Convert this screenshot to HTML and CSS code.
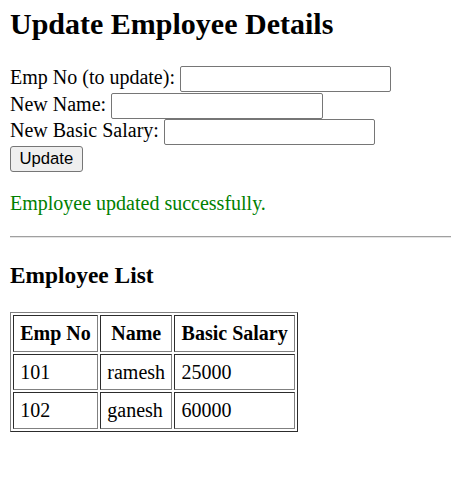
FILE: index.html
```html
<!DOCTYPE html>
<html>
<head>
<meta charset="utf-8">
<title>Update Employee</title>
<link rel="stylesheet" href="styles.css">
</head>
<body>
<h1 class="title">Update Employee Details</h1>
<form class="form">
  <div class="row"><label class="label">Emp No (to update):</label><input type="text" class="field"></div>
  <div class="row"><label class="label">New Name:</label><input type="text" class="field"></div>
  <div class="row"><label class="label">New Basic Salary:</label><input type="text" class="field"></div>
  <button type="button" class="btn">Update</button>
</form>
<p class="msg">Employee updated successfully.</p>
<div class="rule"></div>
<h3 class="subtitle">Employee List</h3>
<table class="list">
  <tr><th>Emp No</th><th>Name</th><th>Basic Salary</th></tr>
  <tr><td>101</td><td>ramesh</td><td>25000</td></tr>
  <tr><td>102</td><td>ganesh</td><td>60000</td></tr>
</table>
</body>
</html>
```

FILE: styles.css
```css
html {
  overflow: hidden;
}
body {
  font-family: "Liberation Serif", "Times New Roman", serif;
  font-size: 20px;
  margin: 0;
  padding: 0 0 0 10px;
  color: #000;
  background: #fff;
}
.title {
  font-size: 30px;
  line-height: 34px;
  font-weight: bold;
  margin: 7px 0 25px;
}
.form {
  margin: 0;
}
.row {
  display: flex;
  align-items: flex-start;
  gap: 5px;
  height: 26.6px;
}
.label {
  line-height: 22.5px;
}
.field {
  box-sizing: border-box;
  width: 211.5px;
  height: 26px;
  margin: 0;
  padding: 1px 3px;
  border: 1px solid #767676;
  border-radius: 2px;
  background: #fff;
  font-family: "Liberation Sans", Arial, sans-serif;
  font-size: 16.67px;
}
.btn {
  display: block;
  box-sizing: border-box;
  width: 72.7px;
  height: 26.5px;
  margin: 0;
  padding: 0;
  border: 1px solid #767676;
  border-radius: 3px;
  background: #efefef;
  color: #000;
  font-family: "Liberation Sans", Arial, sans-serif;
  font-size: 16.67px;
}
.msg {
  color: #008000;
  margin: 20px 0 21px;
  line-height: 23px;
}
.rule {
  height: 0;
  margin: 0;
  border-top: 1px solid #a0a0a0;
  border-bottom: 1px solid #e4e4e4;
}
.subtitle {
  font-size: 23.4px;
  margin: 23.4px 0;
}
.list {
  border: 1px outset #808080;
  border-spacing: 2.5px;
}
.list th,
.list td {
  border: 1px inset #808080;
  padding: 6px 6.25px;
  line-height: 22.5px;
}
.list td {
  text-align: left;
}
```
